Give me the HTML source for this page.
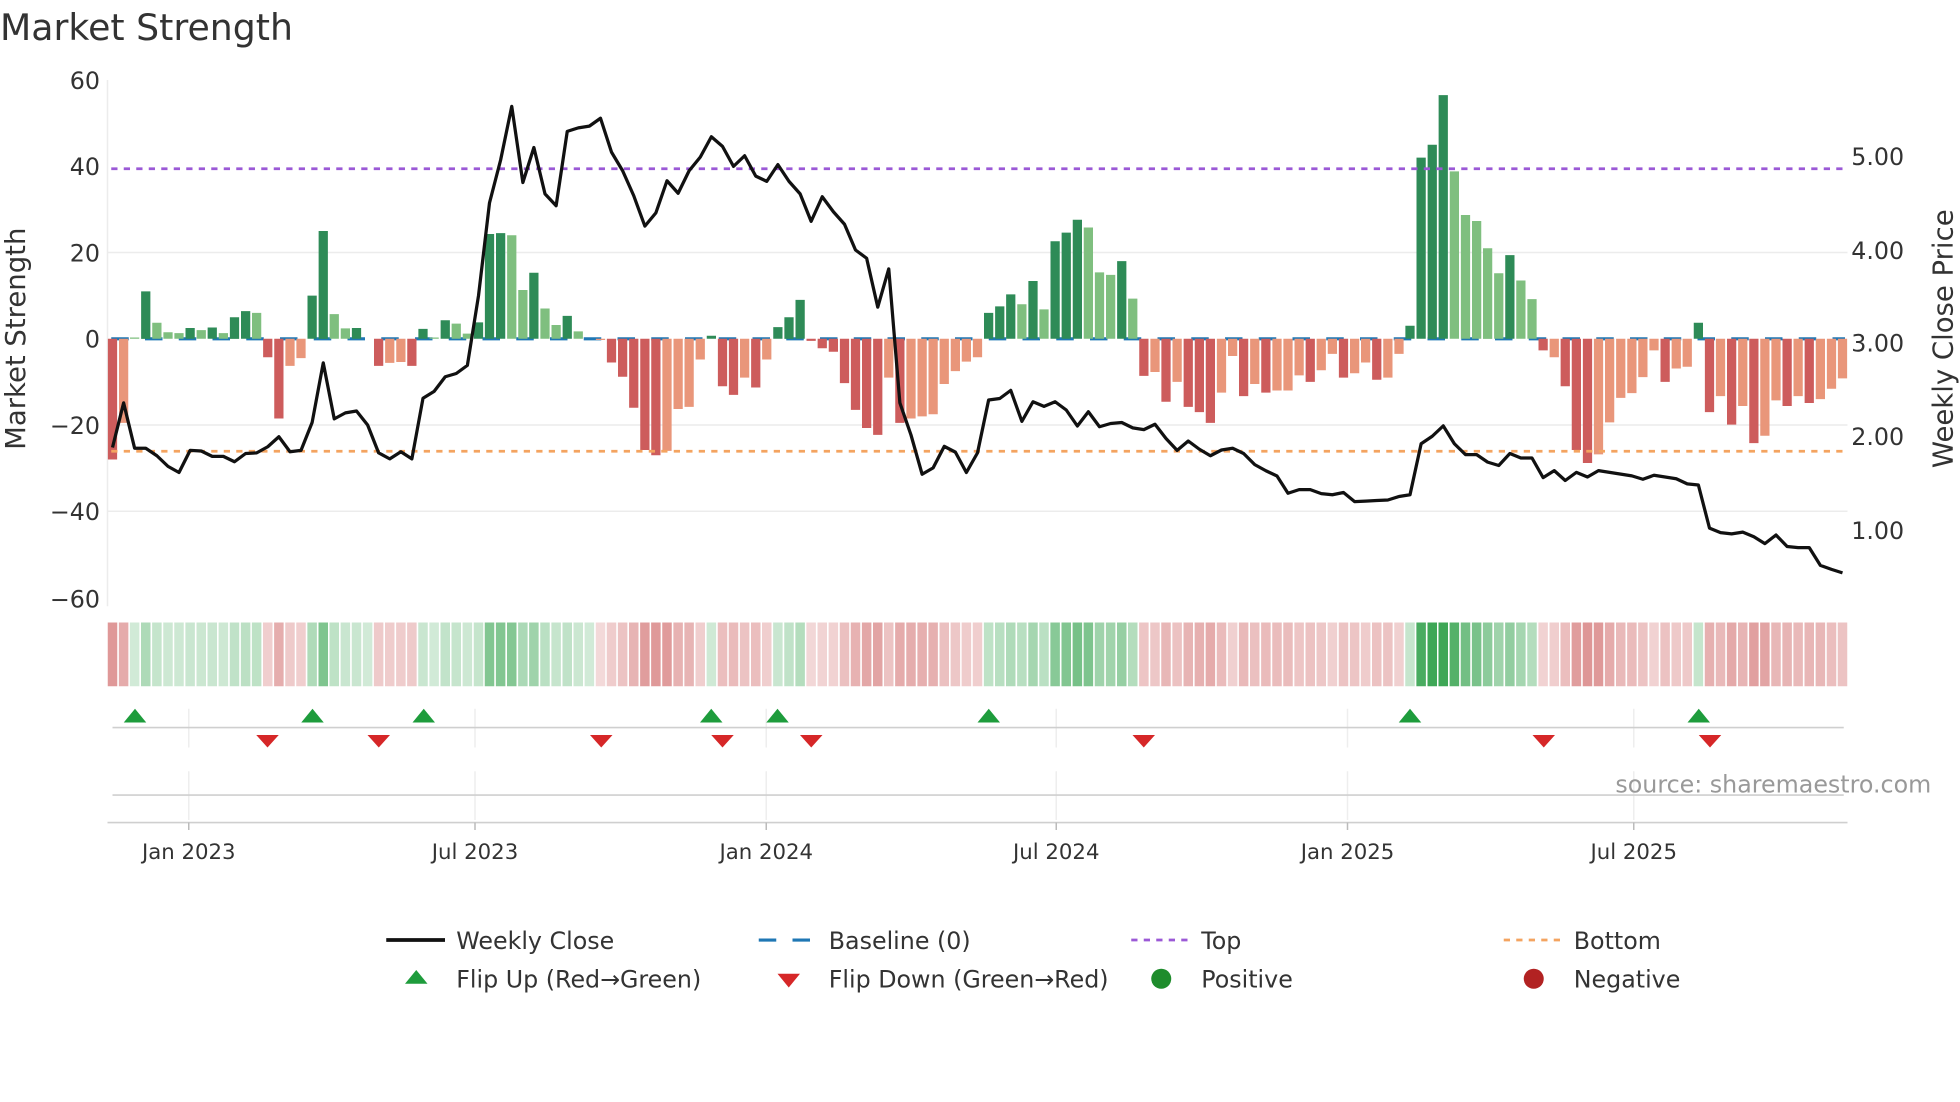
<!DOCTYPE html>
<html><head><meta charset="utf-8"><style>
html,body{margin:0;padding:0;background:#fff;}
svg{display:block;}
text{font-family:"DejaVu Sans","Liberation Sans",sans-serif;}
</style></head><body>
<svg id="s" width="1960" height="1102" viewBox="0 0 1568 881.6" xmlns="http://www.w3.org/2000/svg">
<rect width="1568" height="882" fill="#fff"/>
<text x="0" y="32" font-size="29" fill="#333">Market Strength</text>
<g stroke="#ececec" stroke-width="1.2">
<line x1="86" y1="202" x2="1478" y2="202"/>
<line x1="86" y1="340" x2="1478" y2="340"/>
<line x1="86" y1="409" x2="1478" y2="409"/>
<line x1="86" y1="64" x2="86" y2="485"/>
</g>
<g font-size="19" fill="#333" text-anchor="end">
<text x="80" y="71">60</text><text x="80" y="140">40</text><text x="80" y="209">20</text>
<text x="80" y="278">0</text><text x="80" y="347">−20</text><text x="80" y="416">−40</text><text x="80" y="486">−60</text>
</g>
<g font-size="19" fill="#333">
<text x="1481" y="132">5.00</text><text x="1481" y="207">4.00</text><text x="1481" y="281">3.00</text>
<text x="1481" y="356">2.00</text><text x="1481" y="431">1.00</text>
</g>
<text transform="translate(20,271) rotate(-90)" font-size="22" fill="#333" text-anchor="middle">Market Strength</text>
<text transform="translate(1562,271) rotate(-90)" font-size="22" fill="#333" text-anchor="middle">Weekly Close Price</text>
<line x1="89" y1="271" x2="1476" y2="271" stroke="#1f77b4" stroke-width="2.5" stroke-dasharray="14 13"/>
<g id="bars"></g>
<line x1="89" y1="135" x2="1476" y2="135" stroke="#9b59d6" stroke-width="2.2" stroke-dasharray="5 5"/>
<line x1="89" y1="361" x2="1476" y2="361" stroke="#f4a460" stroke-width="2.2" stroke-dasharray="5 5"/>
<polyline id="price" fill="none" stroke="#111" stroke-width="2.6" stroke-linejoin="round"/>
<g id="heat"></g>
<g stroke="#eeeeee" stroke-width="1.2">
<line x1="151" y1="567" x2="151" y2="598"/><line x1="380" y1="567" x2="380" y2="598"/>
<line x1="613" y1="567" x2="613" y2="598"/><line x1="845" y1="567" x2="845" y2="598"/>
<line x1="1078" y1="567" x2="1078" y2="598"/><line x1="1307" y1="567" x2="1307" y2="598"/>
<line x1="151" y1="617" x2="151" y2="656"/><line x1="380" y1="617" x2="380" y2="656"/>
<line x1="613" y1="617" x2="613" y2="656"/><line x1="845" y1="617" x2="845" y2="656"/>
<line x1="1078" y1="617" x2="1078" y2="656"/><line x1="1307" y1="617" x2="1307" y2="656"/>
</g>
<line x1="90" y1="582" x2="1475" y2="582" stroke="#cfcfcf" stroke-width="1.3"/>
<line x1="90" y1="636" x2="1475" y2="636" stroke="#cfcfcf" stroke-width="1.3"/>
<line x1="86" y1="658" x2="1478" y2="658" stroke="#cfcfcf" stroke-width="1.3"/>
<g stroke="#bbb" stroke-width="1.2">
<line x1="151" y1="658" x2="151" y2="664"/><line x1="380" y1="658" x2="380" y2="664"/>
<line x1="613" y1="658" x2="613" y2="664"/><line x1="845" y1="658" x2="845" y2="664"/>
<line x1="1078" y1="658" x2="1078" y2="664"/><line x1="1307" y1="658" x2="1307" y2="664"/>
</g>
<g id="flips"></g>
<text x="1545" y="634" font-size="19" fill="#999" text-anchor="end">source: sharemaestro.com</text>
<g font-size="17" fill="#333" text-anchor="middle">
<text x="151" y="687">Jan 2023</text><text x="380" y="687">Jul 2023</text><text x="613" y="687">Jan 2024</text>
<text x="845" y="687">Jul 2024</text><text x="1078" y="687">Jan 2025</text><text x="1307" y="687">Jul 2025</text>
</g>
<g font-size="19" fill="#333">
<line x1="309" y1="752" x2="356" y2="752" stroke="#111" stroke-width="3"/>
<text x="365" y="759">Weekly Close</text>
<line x1="607" y1="752" x2="652" y2="752" stroke="#1f77b4" stroke-width="2.5" stroke-dasharray="14 13"/>
<text x="663" y="759">Baseline (0)</text>
<line x1="905" y1="752" x2="950" y2="752" stroke="#9b59d6" stroke-width="2.2" stroke-dasharray="5 5"/>
<text x="961" y="759">Top</text>
<line x1="1203" y1="752" x2="1248" y2="752" stroke="#f4a460" stroke-width="2.2" stroke-dasharray="5 5"/>
<text x="1259" y="759">Bottom</text>
<polygon points="324,787 342,787 333,776" fill="#1e9c3c"/>
<text x="365" y="790">Flip Up (Red→Green)</text>
<polygon points="622,779 640,779 631,790" fill="#d62728"/>
<text x="663" y="790">Flip Down (Green→Red)</text>
<circle cx="929" cy="783" r="8" fill="#1e8c2c"/>
<text x="961" y="790">Positive</text>
<circle cx="1227" cy="783" r="8" fill="#b22222"/>
<text x="1259" y="790">Negative</text>
</g>
</svg>
<script>
var V=[[-28,'R'],[-19.5,'S'],[0.3,'L'],[11,'D'],[3.7,'L'],[1.5,'L'],[1.3,'L'],[2.5,'D'],[2,'L'],[2.6,'D'],[1.3,'L'],[5,'D'],[6.4,'D'],[6,'L'],[-4.3,'R'],[-18.5,'R'],[-6.3,'S'],[-4.5,'S'],[10,'D'],[25,'D'],[5.7,'L'],[2.4,'L'],[2.5,'D'],[0,'L'],[-6.3,'R'],[-5.6,'S'],[-5.4,'S'],[-6.3,'R'],[2.3,'D'],[0.3,'L'],[4.3,'D'],[3.5,'L'],[1.2,'L'],[3.8,'D'],[24.3,'D'],[24.5,'D'],[24,'L'],[11.3,'L'],[15.3,'D'],[7,'L'],[3.2,'L'],
[5.3,'D'],[1.7,'L'],[0,'L'],[-0.3,'S'],[-5.5,'R'],[-8.8,'R'],[-16,'R'],[-25.8,'R'],[-27,'R'],[-26,'S'],[-16.3,'S'],[-15.8,'S'],[-4.8,'S'],[0.7,'D'],[-11,'R'],[-13,'R'],[-9,'S'],[-11.3,'R'],[-4.8,'S'],[2.7,'D'],[5,'D'],[9,'D'],[-0.5,'R'],[-2.2,'R'],[-3,'R'],[-10.3,'R'],[-16.5,'R'],[-20.7,'R'],[-22.3,'R'],[-9,'S'],[-19.5,'R'],[-18.5,'S'],[-18,'S'],[-17.5,'S'],[-10.5,'S'],[-7.5,'S'],[-5.3,'S'],[-4.3,'S'],
[6,'D'],[7.5,'D'],[10.3,'D'],[8,'L'],[13.4,'D'],[6.8,'L'],[22.6,'D'],[24.6,'D'],[27.6,'D'],[25.8,'L'],[15.4,'L'],[14.8,'L'],[18,'D'],[9.3,'L'],
[-8.6,'R'],[-7.7,'S'],[-14.6,'R'],[-10,'S'],[-15.8,'R'],[-17,'R'],[-19.5,'R'],[-12.5,'S'],[-4,'S'],[-13.3,'R'],[-10.5,'S'],[-12.5,'R'],[-12,'S'],[-12,'S'],[-8.5,'S'],[-10,'R'],[-7.3,'S'],[-3.5,'S'],[-9,'R'],[-8,'S'],[-5.5,'S'],[-9.5,'R'],[-9,'S'],[-3.5,'S'],
[3,'D'],[42,'D'],[45,'D'],[56.5,'D'],[38.8,'L'],[28.7,'L'],[27.3,'L'],[21,'L'],[15.2,'L'],[19.4,'D'],[13.5,'L'],[9.2,'L'],[-2.7,'R'],[-4.3,'S'],[-11,'R'],[-25.8,'R'],[-28.8,'R'],[-26.8,'S'],[-19.4,'S'],[-13.7,'S'],[-12.6,'S'],[-8.9,'S'],[-2.7,'S'],[-10,'R'],[-6.9,'S'],[-6.5,'S'],[3.7,'D'],[-17,'R'],[-13.3,'S'],[-19.9,'R'],[-15.6,'S'],[-24.2,'R'],[-22.5,'S'],[-14.3,'S'],[-15.6,'R'],[-13.3,'S'],[-14.9,'R'],[-14,'S'],[-11.6,'S'],[-9.2,'S']];
var A=[1085,960,1087,1087,1108,1138,1155,1093,1095,1110,1110,1125,1102,1100,1083,1055,1097,1093,1015,848,1005,988,983,1022,1100,1117,1097,1117,947,928,887,878,855,660,400,280,130,343,245,375,408,
200,190,185,163,258,310,380,465,428,338,373,310,272,215,242,298,268,325,340,293,340,375,452,383,425,460,532,555,692,585,960,1050,1160,1142,1082,1098,1155,1100,
952,948,925,1012,957,970,957,980,1025,985,1027,1018,1015,1030,1035,1020,1060,1093,1067,1090,1108,1092,1087,1102,1133,1150,1165,1213];
var B=[853,853,860,862,858,874,873,872,871,865,862,773,760,742,773,792,792,805,811,790,798,798,832,820,837,823,831,820,823,826,829,835,828,831,834,843,845,920,928,930,927,935,947,932,952,954,954,985,992,998];
var C={D:'#2e8b57',L:'#7fbf7f',R:'#cd5c5c',S:'#e9967a'};
function cx(i){return 90+i*8.872;}
var bars='',heat='';
for(var i=0;i<V.length;i++){
 var v=V[i][0],c=V[i][1],x=cx(i)-3.7,h=Math.abs(v)*3.45,y=v>=0?271-h:271;
 if(h>0.3)bars+='<rect x="'+x.toFixed(1)+'" y="'+y.toFixed(1)+'" width="7.4" height="'+h.toFixed(1)+'" fill="'+C[c]+'"/>';
 var a=Math.min(Math.abs(v)/45,1),col;
 if(v>=0){col='rgba(46,160,72,'+(0.22+0.7*a).toFixed(2)+')';}else{col='rgba(200,80,80,'+(0.22+0.6*a).toFixed(2)+')';}
 heat+='<rect x="'+(cx(i)-3.8).toFixed(1)+'" y="498" width="7.6" height="51" fill="'+col+'"/>';
}
document.getElementById('bars').innerHTML=bars;
document.getElementById('heat').innerHTML=heat;
var pts=[];
for(var i=0;i<A.length;i++)pts.push(cx(i).toFixed(1)+','+(48+A[i]*0.2857).toFixed(1));
for(var j=0;j<B.length;j++)pts.push(cx(A.length+j).toFixed(1)+','+(B[j]*0.4592).toFixed(1));
document.getElementById('price').setAttribute('points',pts.join(' '));
var up=[108,250,339,569,622,791,1128,1359],dn=[214,303,481,578,649,915,1235,1368],f='';
up.forEach(function(x){f+='<polygon points="'+(x-9)+',578 '+(x+9)+',578 '+x+',567" fill="#1e9c3c"/>';});
dn.forEach(function(x){f+='<polygon points="'+(x-9)+',588 '+(x+9)+',588 '+x+',598" fill="#d62728"/>';});
document.getElementById('flips').innerHTML=f;
</script>
</body></html>
